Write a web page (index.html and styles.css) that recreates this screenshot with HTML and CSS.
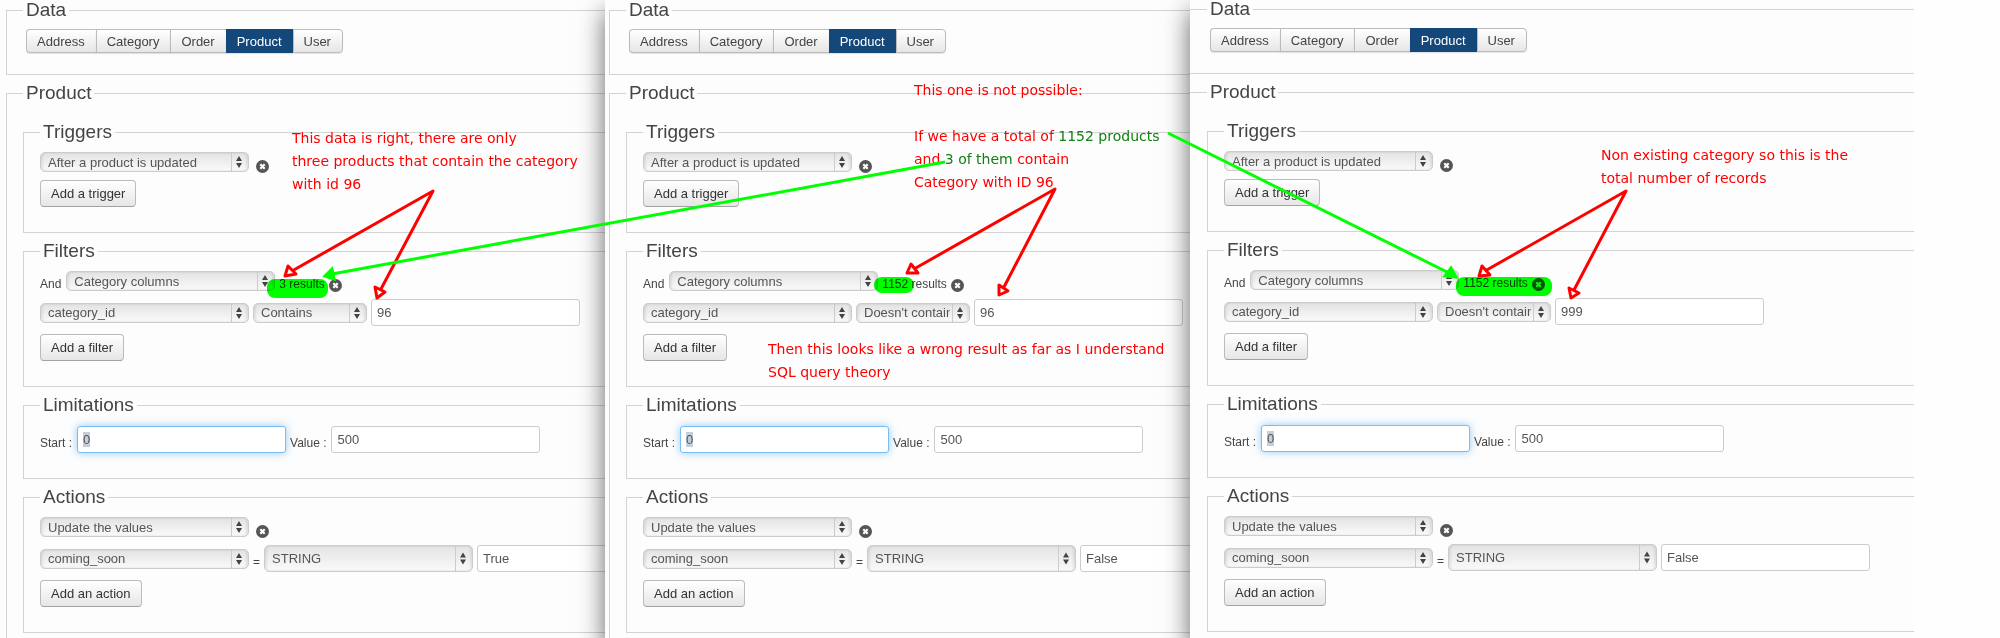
FILE: index.html
```html
<!DOCTYPE html>
<html lang="en">
<head>
    <meta charset="UTF-8">
    <meta name="viewport" content="width=device-width, initial-scale=1.0">
    <title>Product filters</title>
    <link rel="stylesheet" href="styles.css">
</head>
<body>

    <svg class="sprite" aria-hidden="true">
        <symbol id="icon-remove" viewBox="0 0 13 13">
            <circle cx="6.5" cy="6.5" r="6.5" fill="#555"/>
            <path d="M4.3 4.3L8.7 8.7M8.7 4.3L4.3 8.7" stroke="#fff" stroke-width="2.2"/>
        </symbol>
    </svg>

    <div class="panels">
        <!-- contains 96 -->
        <section class="panel panel-contains">
            <fieldset class="box box-data">
                <legend>Data</legend>
                <div class="btn-group">
                    <button type="button">Address</button>
                    <button type="button">Category</button>
                    <button type="button">Order</button>
                    <button type="button" class="active">Product</button>
                    <button type="button">User</button>
                </div>
            </fieldset>
            <fieldset class="box box-product">
                <legend>Product</legend>
                <fieldset class="box">
                    <legend>Triggers</legend>
                    <div class="row">
                        <select aria-label="Trigger"><option>After a product is updated</option></select>
                        <button type="button" class="remove" aria-label="Remove trigger"><svg><use href="#icon-remove"/></svg></button>
                    </div>
                    <button type="button" class="btn">Add a trigger</button>
                </fieldset>
                <fieldset class="box">
                    <legend>Filters</legend>
                    <div class="row">
                        <label for="type1">And</label>
                        <select id="type1"><option>Category columns</option></select>
                        <span class="text">3 results</span>
                        <button type="button" class="remove" aria-label="Remove filter"><svg><use href="#icon-remove"/></svg></button>
                    </div>
                    <div class="row">
                        <select aria-label="Column"><option>category_id</option></select>
                        <select class="operator" aria-label="Operator"><option>Contains</option></select>
                        <input type="text" value="96" aria-label="Filter value">
                    </div>
                    <button type="button" class="btn">Add a filter</button>
                </fieldset>
                <fieldset class="box box-limits">
                    <legend>Limitations</legend>
                    <div class="row">
                        <label for="start1">Start :</label>
                        <input type="text" class="focused" id="start1" value="0">
                        <label for="value1">Value :</label>
                        <input type="text" id="value1" value="500">
                    </div>
                </fieldset>
                <fieldset class="box">
                    <legend>Actions</legend>
                    <div class="row">
                        <select aria-label="Action"><option>Update the values</option></select>
                        <button type="button" class="remove" aria-label="Remove action"><svg><use href="#icon-remove"/></svg></button>
                    </div>
                    <div class="row">
                        <select aria-label="Field"><option>coming_soon</option></select>
                        <span class="text">=</span>
                        <select class="tall" aria-label="Value type"><option>STRING</option></select>
                        <input type="text" value="True" aria-label="New value">
                    </div>
                    <button type="button" class="btn">Add an action</button>
                </fieldset>
            </fieldset>
        </section>

        <!-- doesn't contain 96 -->
        <section class="panel panel-excludes">
            <fieldset class="box box-data">
                <legend>Data</legend>
                <div class="btn-group">
                    <button type="button">Address</button>
                    <button type="button">Category</button>
                    <button type="button">Order</button>
                    <button type="button" class="active">Product</button>
                    <button type="button">User</button>
                </div>
            </fieldset>
            <fieldset class="box box-product">
                <legend>Product</legend>
                <fieldset class="box">
                    <legend>Triggers</legend>
                    <div class="row">
                        <select aria-label="Trigger"><option>After a product is updated</option></select>
                        <button type="button" class="remove" aria-label="Remove trigger"><svg><use href="#icon-remove"/></svg></button>
                    </div>
                    <button type="button" class="btn">Add a trigger</button>
                </fieldset>
                <fieldset class="box">
                    <legend>Filters</legend>
                    <div class="row">
                        <label for="type2">And</label>
                        <select id="type2"><option>Category columns</option></select>
                        <span class="text">1152 results</span>
                        <button type="button" class="remove" aria-label="Remove filter"><svg><use href="#icon-remove"/></svg></button>
                    </div>
                    <div class="row">
                        <select aria-label="Column"><option>category_id</option></select>
                        <select class="operator" aria-label="Operator"><option>Doesn't contain</option></select>
                        <input type="text" value="96" aria-label="Filter value">
                    </div>
                    <button type="button" class="btn">Add a filter</button>
                </fieldset>
                <fieldset class="box box-limits">
                    <legend>Limitations</legend>
                    <div class="row">
                        <label for="start2">Start :</label>
                        <input type="text" class="focused" id="start2" value="0">
                        <label for="value2">Value :</label>
                        <input type="text" id="value2" value="500">
                    </div>
                </fieldset>
                <fieldset class="box">
                    <legend>Actions</legend>
                    <div class="row">
                        <select aria-label="Action"><option>Update the values</option></select>
                        <button type="button" class="remove" aria-label="Remove action"><svg><use href="#icon-remove"/></svg></button>
                    </div>
                    <div class="row">
                        <select aria-label="Field"><option>coming_soon</option></select>
                        <span class="text">=</span>
                        <select class="tall" aria-label="Value type"><option>STRING</option></select>
                        <input type="text" value="False" aria-label="New value">
                    </div>
                    <button type="button" class="btn">Add an action</button>
                </fieldset>
            </fieldset>
        </section>

        <!-- doesn't contain 999 -->
        <section class="panel panel-missing">
            <fieldset class="box box-data">
                <legend>Data</legend>
                <div class="btn-group">
                    <button type="button">Address</button>
                    <button type="button">Category</button>
                    <button type="button">Order</button>
                    <button type="button" class="active">Product</button>
                    <button type="button">User</button>
                </div>
            </fieldset>
            <fieldset class="box box-product">
                <legend>Product</legend>
                <fieldset class="box">
                    <legend>Triggers</legend>
                    <div class="row">
                        <select aria-label="Trigger"><option>After a product is updated</option></select>
                        <button type="button" class="remove" aria-label="Remove trigger"><svg><use href="#icon-remove"/></svg></button>
                    </div>
                    <button type="button" class="btn">Add a trigger</button>
                </fieldset>
                <fieldset class="box">
                    <legend>Filters</legend>
                    <div class="row">
                        <label for="type3">And</label>
                        <select id="type3"><option>Category columns</option></select>
                        <span class="text">1152 results</span>
                        <button type="button" class="remove" aria-label="Remove filter"><svg><use href="#icon-remove"/></svg></button>
                    </div>
                    <div class="row">
                        <select aria-label="Column"><option>category_id</option></select>
                        <select class="operator" aria-label="Operator"><option>Doesn't contain</option></select>
                        <input type="text" value="999" aria-label="Filter value">
                    </div>
                    <button type="button" class="btn">Add a filter</button>
                </fieldset>
                <fieldset class="box box-limits">
                    <legend>Limitations</legend>
                    <div class="row">
                        <label for="start3">Start :</label>
                        <input type="text" class="focused" id="start3" value="0">
                        <label for="value3">Value :</label>
                        <input type="text" id="value3" value="500">
                    </div>
                </fieldset>
                <fieldset class="box">
                    <legend>Actions</legend>
                    <div class="row">
                        <select aria-label="Action"><option>Update the values</option></select>
                        <button type="button" class="remove" aria-label="Remove action"><svg><use href="#icon-remove"/></svg></button>
                    </div>
                    <div class="row">
                        <select aria-label="Field"><option>coming_soon</option></select>
                        <span class="text">=</span>
                        <select class="tall" aria-label="Value type"><option>STRING</option></select>
                        <input type="text" value="False" aria-label="New value">
                    </div>
                    <button type="button" class="btn">Add an action</button>
                </fieldset>
            </fieldset>
        </section>
    </div>

    <!-- marker highlights over the result counts -->
    <div class="mark mark-three"></div>
    <div class="mark mark-count"></div>
    <div class="mark mark-total"></div>

    <!-- notes -->
    <p class="note note-right">This data is right, there are only<br>three products that contain the category<br>with id 96</p>
    <p class="note note-impossible">This one is not possible:<br><br>If we have a total of <span>1152 products</span><br>and <span>3 of them</span> contain<br>Category with ID 96</p>
    <p class="note note-wrong">Then this looks like a wrong result as far as I understand<br>SQL query theory</p>
    <p class="note note-total">Non existing category so this is the<br>total number of records</p>

    <svg class="arrows" width="2000" height="638" viewBox="0 0 2000 638" aria-hidden="true">
        <g class="arrow-red">
            <path d="M292 271L433 191L381 289"/>
            <path d="M285 276L288 266L296 274Z"/>
            <path d="M377 298L375 287L385 292Z"/>
            <path d="M914 269L1055 189L1004 287"/>
            <path d="M907 273L911 264L918 273Z"/>
            <path d="M999 295L999 285L1008 291Z"/>
            <path d="M1485 271L1626 191L1574 290"/>
            <path d="M1479 276L1482 266L1490 275Z"/>
            <path d="M1571 298L1569 288L1579 293Z"/>
        </g>
        <g class="arrow-green">
            <path d="M945 162L332 274"/>
            <path class="head" d="M325 276L332 269L334 279Z"/>
            <path d="M1168 133L1449 273"/>
            <path class="head" d="M1456 277L1451 268L1445 276Z"/>
        </g>
    </svg>

</body>
</html>
```
FILE: styles.css
```css
body {
    margin: 0;
    background-color: #fefefe;
    font-family: "Liberation Sans", Arial, sans-serif;
    font-size: 13px;
    color: #444;
    position: relative;
    overflow: hidden;
}
.sprite {
    display: none;
}
.panels {
    display: grid;
    grid-template-columns: 605fr 585fr 724fr 86fr;
    min-height: 100vh;
}
.panel {
    display: flex;
    flex-direction: column;
    position: relative;
    min-width: 0;
    box-sizing: border-box;
    overflow: hidden;
    background-color: #fdfdfd;
}
.panel-contains {
    padding-left: 6px;
}
.panel-excludes {
    padding-left: 4px;
    box-shadow: 0 12px 24px rgba(0, 0, 0, 0.6);
}
.panel-missing {
    margin-top: -1px;
    box-shadow: 0 12px 24px rgba(0, 0, 0, 0.6);
    clip-path: inset(0 0 0 -40px); /* shadow on the left side only */
}

/* fieldsets run past the right edge of the panel */
.box {
    min-width: 0;
    margin: 0 0 8px;
    padding: 10px 0 25px 16px;
    border: 1px solid #d3d3d3;
    border-right: none;
}
.box-data {
    padding-top: 9px;
    padding-bottom: 21px;
}
.box-product {
    flex: 1;
    margin-bottom: 0;
    padding-top: 19px;
    padding-bottom: 0;
    border-bottom: none;
}
.box-limits {
    padding-top: 11px;
}
.panel-missing > .box {
    padding-left: 17px;
    border-left: none;
}
legend {
    padding: 0 3px;
    font-size: 19px;
    line-height: 20px;
}

/* controls */
button, input, select {
    font-family: inherit;
    font-size: 13px;
    color: #555;
    margin: 0;
    box-sizing: border-box;
}
.btn-group {
    display: flex;
    margin-left: 3px;
}
.btn-group button {
    height: 24px;
    padding: 0 11px 0 10px;
    border: 1px solid #bbb;
    border-width: 1px 0 1px 1px;
    background: linear-gradient(#fff, #e6e6e6);
    box-shadow: 0 1px 1px rgba(0, 0, 0, 0.1);
    color: #444;
}
.btn-group button:first-child {
    border-radius: 4px 0 0 4px;
}
.btn-group button:last-child {
    border-right-width: 1px;
    border-radius: 0 4px 4px 0;
}
.btn-group .active {
    background: #14477a;
    border-color: #14477a;
    color: #fff;
}
.btn {
    display: block;
    height: 27px;
    padding: 0 10px;
    border: 1px solid #bbb;
    border-bottom-color: #a2a2a2;
    border-radius: 4px;
    background: linear-gradient(#fff, #e6e6e6);
    color: #333;
}
.row {
    display: flex;
    align-items: center;
    gap: 4px;
    min-height: 20px;
    margin-bottom: 8px;
}
.box-limits .row {
    margin-bottom: 0;
}
.row > * {
    flex-shrink: 0;
}
.row label, .row .text {
    padding-top: 7px;
    font-size: 12px;
    line-height: 13px;
    white-space: nowrap;
}
.row label {
    padding-right: 1px;
}
select {
    appearance: none;
    width: 209px;
    height: 20px;
    padding: 0 19px 0 7px;
    border: 1px solid #ccc;
    border-radius: 5px;
    background:
        url("data:image/svg+xml,%3Csvg xmlns='http://www.w3.org/2000/svg' width='17' height='28'%3E%3Cpath d='M0 0h1v28H0z' fill='%23ccc'/%3E%3Cpath d='M5 13l3-5 3 5zM5 15l3 5 3-5z' fill='%23444'/%3E%3C/svg%3E") no-repeat right center,
        linear-gradient(#e3e3e3, #fafafa);
    box-shadow: inset 2px 0 2px rgba(0, 0, 0, 0.08), inset -2px 0 2px rgba(0, 0, 0, 0.08);
}
.operator {
    width: 114px;
}
.tall {
    height: 27px;
}
input {
    width: 209px;
    height: 27px;
    padding: 0 5px;
    border: 1px solid #ccc;
    border-radius: 3px;
    background-color: #fff;
}
.focused {
    border-color: #7cbdf0;
    background: linear-gradient(#c3ced8, #c3ced8) no-repeat 5px center / 7px 15px #fff;
    box-shadow: 0 0 8px rgba(82, 168, 236, 0.6);
}
.remove {
    display: block;
    margin-bottom: -1px;
    padding: 8px 0 0;
    border: none;
    background: none;
}
select + .remove {
    margin-left: 3px;
}
.remove svg {
    display: block;
    width: 13px;
    height: 13px;
}

/* notes on top of the panels */
.note {
    position: absolute;
    margin: 0;
    font-family: "DejaVu Sans", Verdana, sans-serif;
    font-size: 14px;
    line-height: 23px;
    color: #f00;
    white-space: nowrap;
}
.note span {
    color: #138013;
}
.note-right {
    left: 292px;
    top: 127px;
}
.note-impossible {
    left: 914px;
    top: 79px;
}
.note-wrong {
    left: 768px;
    top: 338px;
}
.note-total {
    left: 1601px;
    top: 144px;
}
.mark {
    position: absolute;
    border-radius: 8px;
    background-color: #0f0;
    mix-blend-mode: multiply;
}
.mark-three {
    left: 267px;
    top: 279px;
    width: 61px;
    height: 19px;
}
.mark-count {
    left: 874px;
    top: 277px;
    width: 40px;
    height: 16px;
}
.mark-total {
    left: 1456px;
    top: 277px;
    width: 96px;
    height: 19px;
}
.arrows {
    position: absolute;
    left: 0;
    top: 0;
    pointer-events: none;
}
.arrow-red path {
    fill: none;
    stroke: #f00;
    stroke-width: 3;
    stroke-linejoin: round;
}
.arrow-green path {
    fill: none;
    stroke: #0f0;
    stroke-width: 3;
}
.arrow-green .head {
    fill: #0f0;
}
```
